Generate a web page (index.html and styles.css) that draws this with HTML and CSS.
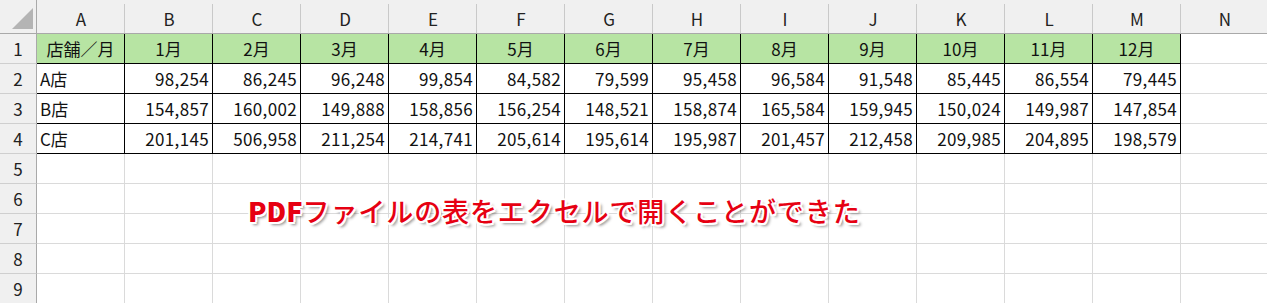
FILE: index.html
```html
<!DOCTYPE html>
<html lang="ja">
<head>
<meta charset="utf-8">
<link rel="stylesheet" href="styles.css">
</head>
<body>
<div class="sheet">
  <div class="grid" id="grid"></div>
  <div class="note"><span class="pdf">PDF</span>ファイルの表をエクセルで開くことができた</div>
</div>
<script>
const cols = ["A","B","C","D","E","F","G","H","I","J","K","L","M","N"];
const data = [
  ["店舗／月","1月","2月","3月","4月","5月","6月","7月","8月","9月","10月","11月","12月"],
  ["A店","98,254","86,245","96,248","99,854","84,582","79,599","95,458","96,584","91,548","85,445","86,554","79,445"],
  ["B店","154,857","160,002","149,888","158,856","156,254","148,521","158,874","165,584","159,945","150,024","149,987","147,854"],
  ["C店","201,145","506,958","211,254","214,741","205,614","195,614","195,987","201,457","212,458","209,985","204,895","198,579"]
];
const g = document.getElementById("grid");
function el(cls, text){ const d=document.createElement("div"); d.className=cls; if(text!==undefined) d.textContent=text; g.appendChild(d); return d; }
const corner = el("corner"); corner.appendChild(document.createElement("span")).className="tri";
cols.forEach(c=>el("colhead", c));
for(let r=1;r<=9;r++){
  el("rowhead", String(r));
  cols.forEach((c,ci)=>{
    const inTable = r<=4 && ci<13;
    let cls = "cell";
    let txt = "";
    if(inTable){
      cls += " tb";
      txt = data[r-1][ci];
      if(r===1) cls += " hd";
      else if(ci>0) cls += " num";
    }
    el(cls, txt);
  });
}
</script>
</body>
</html>
```
FILE: styles.css
```css
html, body {
  margin: 0;
  padding: 0;
  background: #ffffff;
}
.sheet {
  position: relative;
  width: 1267px;
  height: 303px;
  overflow: hidden;
  font-family: "Noto Sans CJK JP", "Noto Sans", sans-serif;
}
.grid {
  display: grid;
  grid-template-columns: 37px repeat(14, 88px);
  grid-template-rows: 34px repeat(9, 30px);
}
.grid > div {
  box-sizing: border-box;
}
.corner {
  background: #f0f0f0;
  border-right: 1px solid #a9a9a9;
  border-bottom: 1px solid #a9a9a9;
  position: relative;
}
.tri {
  position: absolute;
  right: 3px;
  bottom: 4px;
  width: 0;
  height: 0;
  border-left: 21px solid transparent;
  border-bottom: 21px solid #b4b4b4;
}
.colhead {
  background-color: #f0f0f0;
  background-image: linear-gradient(to right, transparent 87px, #c9c9c9 87px);
  background-size: 100% 29px;
  background-position: bottom;
  background-repeat: no-repeat;
  border-bottom: 1px solid #a9a9a9;
  padding-top: 4px;
  display: flex;
  align-items: center;
  justify-content: center;
  font-size: 17px;
  color: #222;
}
.rowhead {
  background: #f0f0f0;
  border-right: 1px solid #a9a9a9;
  border-bottom: 1px solid #cfcfcf;
  display: flex;
  align-items: center;
  justify-content: center;
  font-size: 17px;
  color: #222;
}
.cell {
  border-right: 1px solid #dadada;
  border-bottom: 1px solid #dadada;
  display: flex;
  align-items: center;
  padding: 0 3px;
  font-size: 17px;
  color: #111;
  white-space: nowrap;
}
.cell.tb {
  border-right-color: #000;
  border-bottom-color: #000;
}
.cell.hd {
  background: #b7e4a3;
  justify-content: center;
}
.cell.num {
  justify-content: flex-end;
  letter-spacing: 0.35px;
}
.note {
  position: absolute;
  left: 248px;
  top: 191px;
  font-size: 27px;
  font-weight: 500;
  letter-spacing: 0.9px;
  color: #e60012;
  white-space: nowrap;
  text-shadow:
    2px 0 0 #fff, -2px 0 0 #fff, 0 2px 0 #fff, 0 -2px 0 #fff,
    1.5px 1.5px 0 #fff, -1.5px 1.5px 0 #fff, 1.5px -1.5px 0 #fff, -1.5px -1.5px 0 #fff,
    3px 3px 3px rgba(0,0,0,0.45);
}
.pdf {
  font-weight: 900;
  letter-spacing: 0;
}
```
